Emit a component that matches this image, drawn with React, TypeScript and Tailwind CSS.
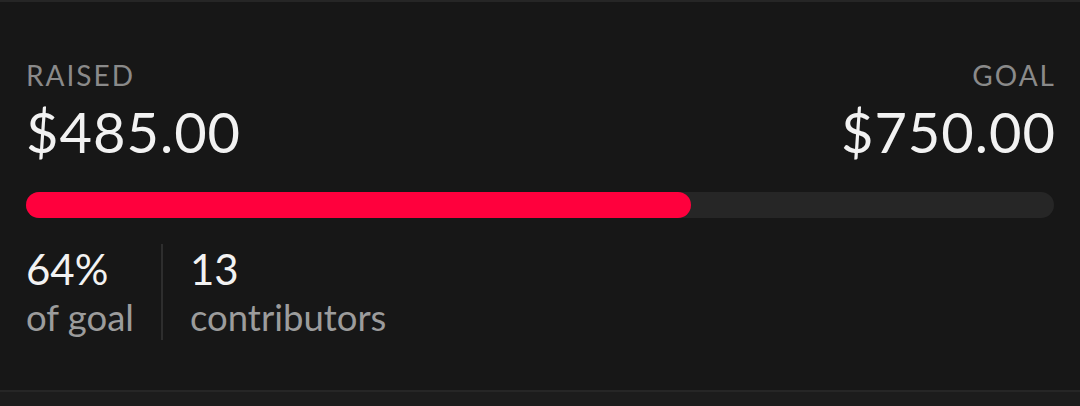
const raised = 485;
const goal = 750;

function Stat({ value, label }: { value: string; label: string }) {
  return (
    <div className="flex flex-col">
      <span className="text-[42px] leading-[50px] text-[#f2f2f2]">{value}</span>
      <span className="text-[36.5px] leading-[46px] text-[#9c9c9c]">{label}</span>
    </div>
  );
}

export default function App() {
  const pct = (raised / goal) * 100;

  return (
    <main className="h-[406px] w-[1080px] overflow-hidden bg-[#1c1c1c] font-['Lato',sans-serif]">
      <section className="h-[392px] border-t-2 border-b-2 border-[#262626] bg-[#171717] px-[26px] pt-[56px]">
        <div className="flex items-start justify-between">
          <div className="flex flex-col">
            <span className="text-[28px] leading-[34px] tracking-[2px] text-[#8a8a8a]">RAISED</span>
            <span className="mt-[6px] text-[56px] leading-[67px] tracking-[1px] text-[#f2f2f2]">${raised.toFixed(2)}</span>
          </div>
          <div className="-mr-[2px] flex flex-col items-end">
            <span className="text-[28px] leading-[34px] tracking-[2px] text-[#8a8a8a]">GOAL</span>
            <span className="mt-[6px] text-[56px] leading-[67px] tracking-[1px] text-[#f2f2f2]">${goal.toFixed(2)}</span>
          </div>
        </div>

        <div className="mt-[27px] h-[26px] w-full rounded-full bg-[#262626]">
          <div className="h-full rounded-full bg-[#ff003d]" style={{ width: `${pct}%` }} />
        </div>

        <div className="mt-[26px] flex items-stretch">
          <Stat value={`${Math.floor(pct)}%`} label="of goal" />
          <div className="mx-[27px] w-[2px] bg-[#2e2e2e]" />
          <Stat value="13" label="contributors" />
        </div>
      </section>
    </main>
  );
}
